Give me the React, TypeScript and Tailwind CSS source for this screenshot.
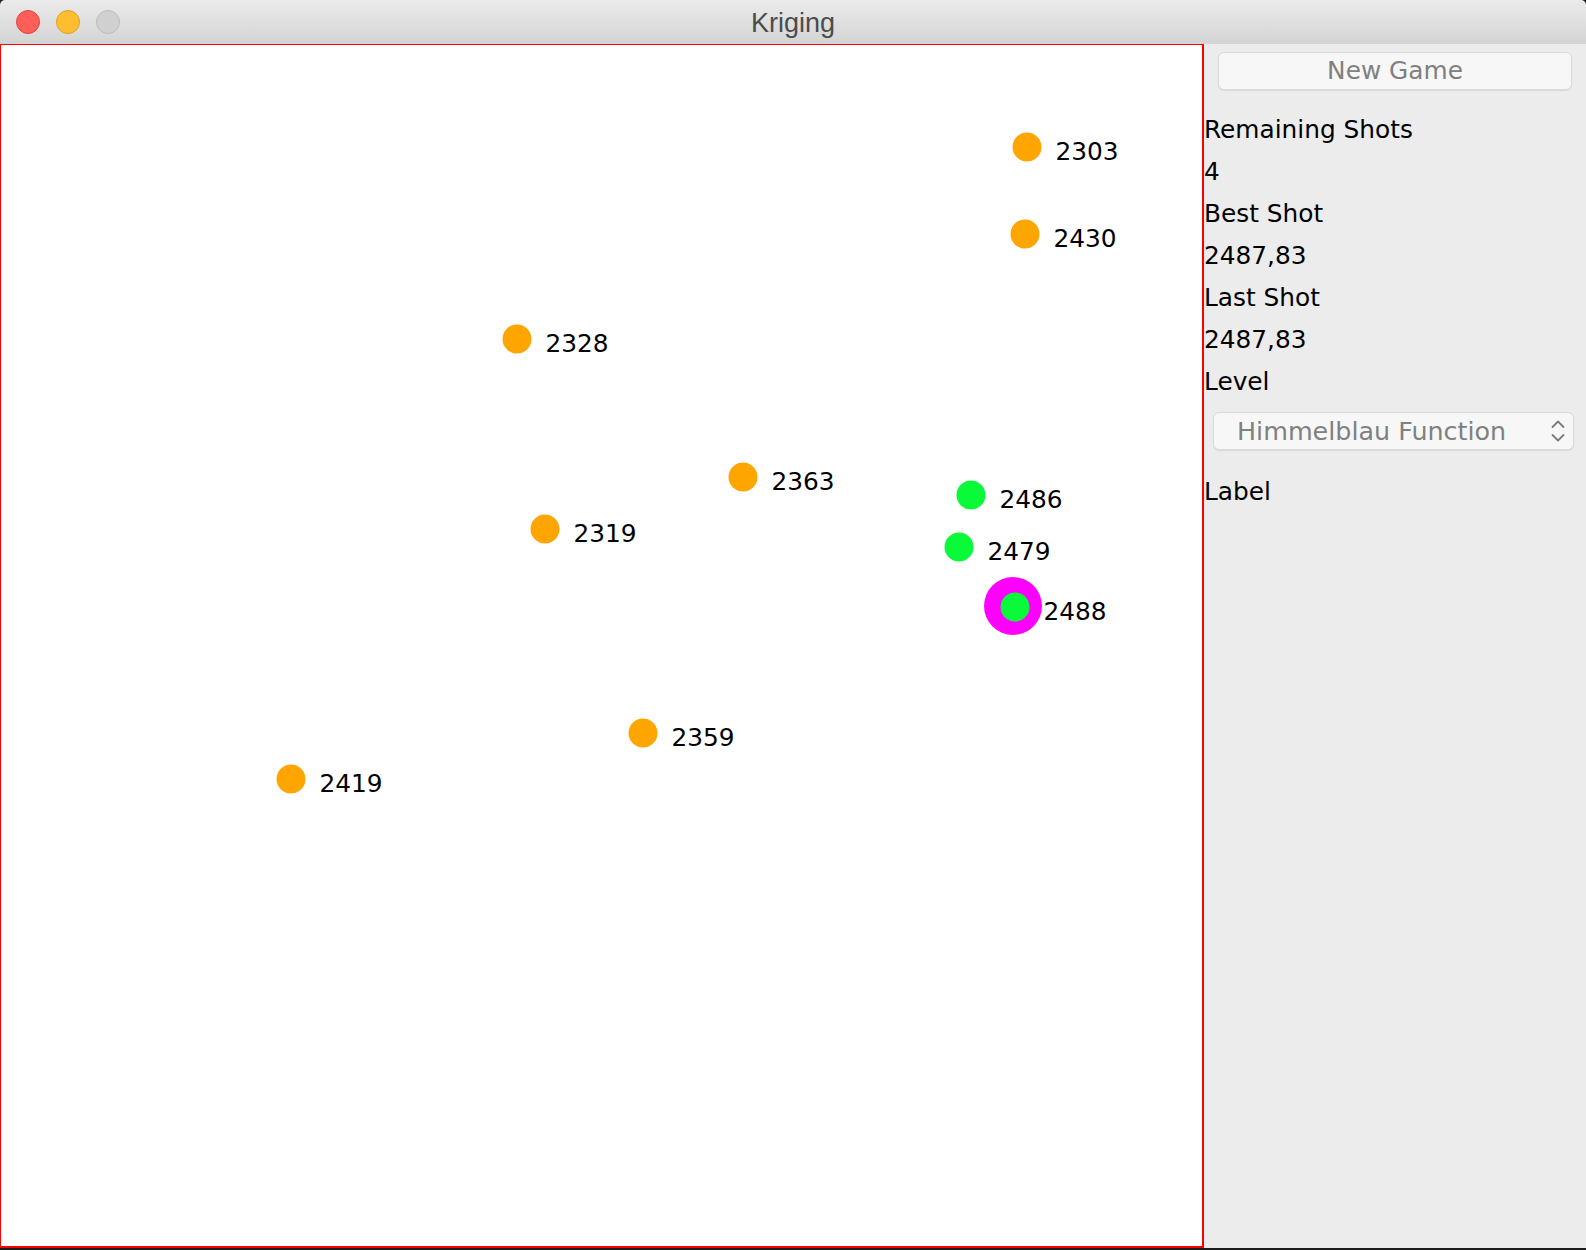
import React from 'react';

type Shot = { x: number; y: number; value: string; good?: boolean; last?: boolean };

// page coordinates of every shot, as they were drawn by the game
const SHOTS: Shot[] = [
    { x: 1027, y: 147, value: '2303' },
    { x: 1025, y: 234, value: '2430' },
    { x: 517, y: 339, value: '2328' },
    { x: 743, y: 477, value: '2363' },
    { x: 545, y: 529, value: '2319' },
    { x: 643, y: 733, value: '2359' },
    { x: 291, y: 779, value: '2419' },
    { x: 971, y: 495, value: '2486', good: true },
    { x: 959, y: 547, value: '2479', good: true },
    { x: 1015, y: 607, value: '2488', good: true, last: true },
];

const ORANGE = '#ffa500';
const GREEN = '#08fa38';
const MAGENTA = '#ff00ff';

const TrafficLights: React.FC = () => (
    <div className="flex items-center gap-[16px] pl-[16px]">
        <span className="block w-[24px] h-[24px] rounded-full bg-[#fe5f58] border border-[#e0443e]" />
        <span className="block w-[24px] h-[24px] rounded-full bg-[#ffbd2f] border border-[#dea123]" />
        <span className="block w-[24px] h-[24px] rounded-full bg-[#d0d0d0] border border-[#bcbcbc]" />
    </div>
);

const Board: React.FC = () => (
    <div className="relative w-[1204px] h-full bg-white border-l border-t border-r-2 border-b-2 border-[#ff0000]">
        <svg className="absolute inset-0" width={1201} height={1201} viewBox="1 45 1201 1201">
            {SHOTS.map((s) => (
                <g key={s.value}>
                    {s.last && <circle cx={s.x - 2} cy={s.y - 1} r={29} fill={MAGENTA} />}
                    <circle cx={s.x} cy={s.y} r={14.5} fill={s.good ? GREEN : ORANGE} />
                    <text
                        x={s.x + 28.5}
                        y={s.y + 12.5}
                        fontSize={24.8}
                        fill="#000"
                        style={{ fontFamily: '"DejaVu Sans", Verdana, sans-serif' }}
                    >
                        {s.value}
                    </text>
                </g>
            ))}
        </svg>
    </div>
);

const Row: React.FC<{ children: React.ReactNode }> = ({ children }) => (
    <div className="h-[42px] leading-[42px] text-[24.8px] text-black whitespace-nowrap">{children}</div>
);

const SidePanel: React.FC = () => (
    <div className="flex-1 bg-[#ececec] flex flex-col pt-[8px] font-['DejaVu_Sans',Verdana,sans-serif]">
        <button className="mx-[14px] h-[38px] rounded-[6px] bg-[#f7f7f7] border border-[#d9d9d9] shadow-[0_1px_1px_rgba(0,0,0,0.08)] text-[24.8px] leading-[36px] text-[#808080]">
            New Game
        </button>
        <div className="mt-[19px]">
            <Row>Remaining Shots</Row>
            <Row>4</Row>
            <Row>Best Shot</Row>
            <Row>2487,83</Row>
            <Row>Last Shot</Row>
            <Row>2487,83</Row>
            <Row>Level</Row>
        </div>
        <div className="mt-[9px] ml-[9px] mr-[12px] h-[38px] rounded-[6px] bg-[#f7f7f7] border border-[#d9d9d9] shadow-[0_1px_1px_rgba(0,0,0,0.08)] flex items-center justify-between pl-[23px] pr-[8px]">
            <span className="text-[25.4px] text-[#808080] whitespace-nowrap">Himmelblau Function</span>
            <svg width="14" height="26" viewBox="0 0 14 26" fill="none" stroke="#7b7b7b" strokeWidth="1.8" strokeLinecap="round" strokeLinejoin="round">
                <path d="M1.5 9 L7 3.5 L12.5 9" />
                <path d="M1.5 17 L7 22.5 L12.5 17" />
            </svg>
        </div>
        <div className="mt-[21px]">
            <Row>Label</Row>
        </div>
    </div>
);

const App: React.FC = () => {
    return (
        <div className="w-[1586px] h-[1250px] bg-[#1c1c1c] overflow-hidden">
            <div className="w-[1586px] h-[1248px] flex flex-col rounded-t-[5px] overflow-hidden">
                <div className="relative h-[44px] shrink-0 flex items-center bg-gradient-to-b from-[#ebebeb] to-[#d4d4d4]">
                    <TrafficLights />
                    <div className="absolute inset-0 flex items-center justify-center pt-[3px] text-[27px] text-[#4c4c4c] font-['Liberation_Sans',Arial,sans-serif]">
                        Kriging
                    </div>
                </div>
                <div className="flex-1 flex min-h-0">
                    <Board />
                    <SidePanel />
                </div>
            </div>
        </div>
    );
};

export default App;
